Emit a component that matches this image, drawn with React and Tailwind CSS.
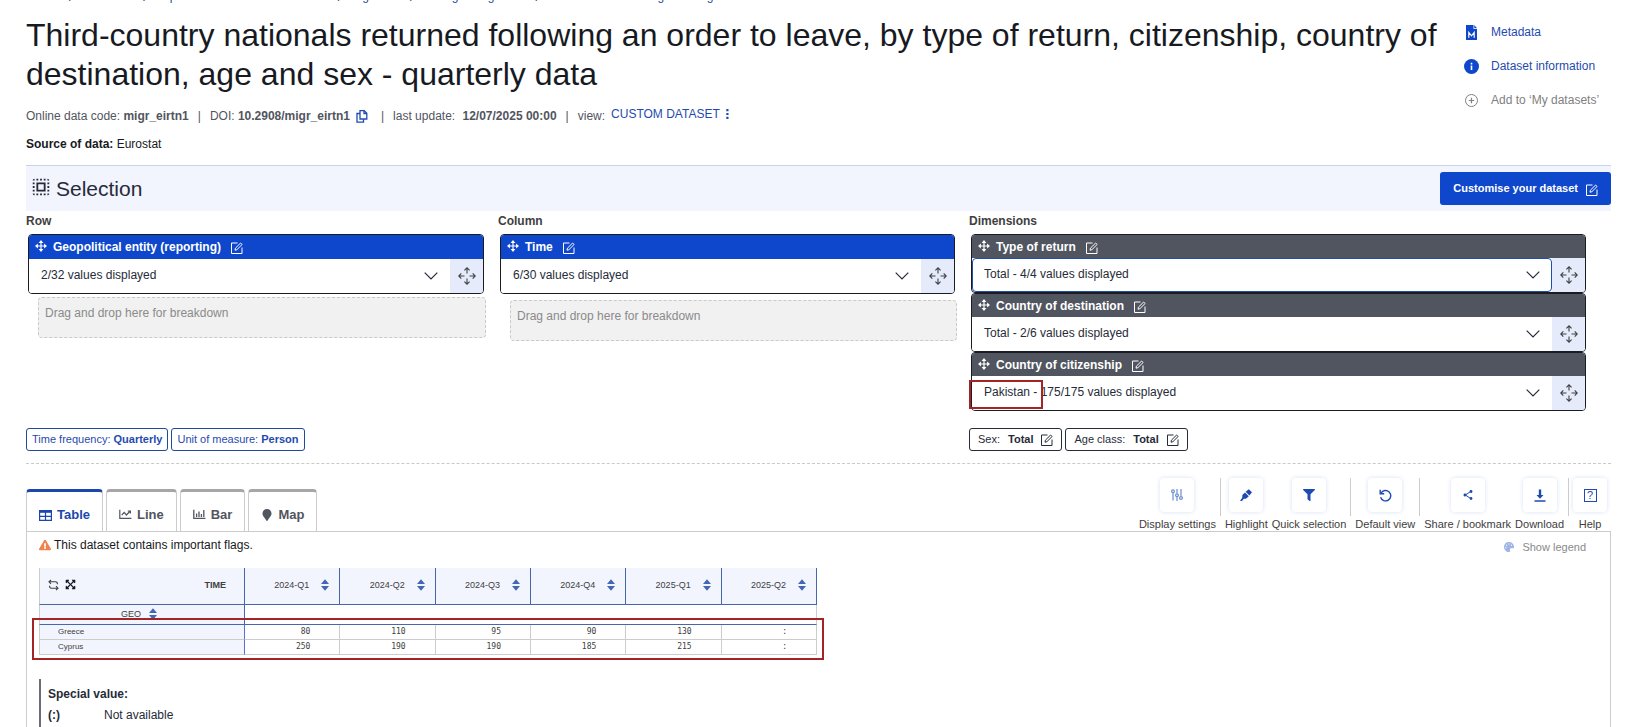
import { FaFilter, FaExclamationTriangle, FaPalette, FaMapMarker, FaExpandArrowsAlt } from 'react-icons/fa';
import { MdSelectAll, MdShare } from 'react-icons/md';

const crumbs = ['Home', 'Database', 'Population and social conditions', 'Migration', 'Managed migration', 'Enforcement of immigration legislation'];

const periods = ['2024-Q1', '2024-Q2', '2024-Q3', '2024-Q4', '2025-Q1', '2025-Q2'];

const rows = [
  { geo: 'Greece', values: ['80', '110', '95', '90', '130', ':'] },
  { geo: 'Cyprus', values: ['250', '190', '190', '185', '215', ':'] },
];

const EditIcon = ({ className = '' }) => (
  <svg viewBox="0 0 12 12" className={`w-3 h-3 shrink-0 ${className}`} fill="none" stroke="currentColor" strokeWidth="1">
    <path d="M6.5 1H.5v10.5H11V5.5" />
    <path d="M4 8.2l.4-2L9.6 1l1.5 1.5-5.2 5.2z" />
  </svg>
);

const MoveIcon = () => (
  <svg viewBox="0 0 12 12" className="-mt-0.5 w-3 h-3 shrink-0" fill="currentColor">
    <path d="M5.4 1.8h1.2v8.4H5.4z" />
    <path d="M1.8 5.4h8.4v1.2H1.8z" />
    <path d="M6 0l2.4 2.9H3.6zM6 12l2.4-2.9H3.6zM0 6l2.9-2.4v4.8zM12 6L9.1 3.6v4.8z" />
  </svg>
);

const DragIcon = () => (
  <svg viewBox="0 0 18 18" className="w-[18px] h-[18px]" fill="none" stroke="currentColor" strokeWidth="1.1">
    <path d="M9 6.5V.9M6.4 3.3L9 .8l2.6 2.5" />
    <path d="M9 11.5v5.6M6.4 14.7L9 17.2l2.6-2.5" />
    <path d="M6.5 9H.9M3.3 6.4L.8 9l2.5 2.6" />
    <path d="M11.5 9h5.6M14.7 6.4L17.2 9l-2.5 2.6" />
  </svg>
);

const SortIcon = () => (
  <svg viewBox="0 0 8 12" className="w-2 h-3 shrink-0 text-[#4267b5]" fill="currentColor">
    <path d="M4 .3L8 5H0zM4 11.7L0 7h8z" />
  </svg>
);

function Dimension({ title, text, dark, focused }) {
  const id = title.toLowerCase().replace(/[^a-z]+/g, '-');
  return (
    <div className="border border-[#1a1c24] rounded overflow-hidden">
      <div className={`flex items-center gap-1.5 px-1.5 text-white ${dark ? 'h-[23px] bg-[#515560]' : 'h-6 bg-[#0e47cb]'}`}>
        <MoveIcon />
        <label htmlFor={id} className="font-bold">{title}</label>
        <button className="ml-1 mt-0.5" aria-label={`Edit ${title}`}><EditIcon /></button>
      </div>
      <div className="flex h-[34px]">
        <div className="relative flex-1">
          <select
            id={id}
            className={`w-full h-full appearance-none bg-white pb-0.5 text-[#262b38] outline-none ${focused ? 'border border-[#1f4fa8] rounded-sm px-[11px]' : 'px-3'}`}
          >
            <option>{text}</option>
          </select>
          <svg viewBox="0 0 14 8" className="absolute right-3 top-[13px] w-3.5 h-2 pointer-events-none text-[#262b38]" fill="none" stroke="currentColor" strokeWidth="1.2">
            <path d="M.7.7L7 7 13.3.7" />
          </svg>
        </div>
        <button className="w-[33px] flex items-center justify-center bg-[#e5ebfb] text-[#404040]" aria-label={`Move ${title}`}>
          <DragIcon />
        </button>
      </div>
    </div>
  );
}

const DropZone = ({ className }) => (
  <div className={`ml-2.5 -mr-0.5 h-[41px] rounded border border-dashed border-[#c9c9c9] bg-[#f1f1f1] px-1.5 pt-[7px] text-[#8a8a8a] ${className}`}>
    Drag and drop here for breakdown
  </div>
);

function Tab({ label, active, children }) {
  return (
    <button
      className={`-mb-px flex h-[43px] items-center gap-[5px] border-x border-t-3 rounded-t-sm pt-1.5 px-3 text-[13px] font-bold ${
        active ? 'bg-white border-x-[#ccc] border-t-[#1b47ad] text-[#1b47ad]' : 'border-b border-[#ccc] border-t-[#a6a6a6] text-[#515560]'
      }`}
    >
      {children}
      {label}
    </button>
  );
}

function Tool({ label, children }) {
  return (
    <button className="flex flex-col items-center gap-[5px] text-[11px] leading-[14px] text-[#404040] whitespace-nowrap">
      <span className="flex w-[34px] h-[34px] items-center justify-center rounded bg-white text-[#1f4bb0] shadow-[0_0_4px_#d5dff2]">
        {children}
      </span>
      {label}
    </button>
  );
}

const Separator = () => <div className="w-px h-[38px] bg-[#ccc]" />;

export default function App() {
  return (
    <div className="flex min-h-screen flex-col overflow-hidden bg-white pl-[26px] pr-[39px] font-['Liberation_Sans',Arial,sans-serif] text-xs text-[#262b38]">
      <nav className="-mt-3 flex h-4 shrink-0 items-center gap-[11px] text-[#1f4b9a]">
        {crumbs.map((crumb, i) => (
          <span key={crumb} className="flex items-center gap-2">
            {i > 0 && <span className="text-sm">/</span>}
            <a href="#">{crumb}</a>
          </span>
        ))}
      </nav>

      <header className="flex justify-between pt-3">
        <div>
          <h1 className="max-w-[1420px] text-[32px] leading-[39px] text-[#171a22]">
            Third-country nationals returned following an order to leave, by type of return, citizenship, country of destination, age and sex - quarterly data
          </h1>
          <div className="mt-3.5 flex items-center gap-[9px] text-[#515560]">
            <span>Online data code: <b>migr_eirtn1</b></span>
            <span>|</span>
            <span className="flex items-center gap-1.5">
              <span>DOI: <b>10.2908/migr_eirtn1</b></span>
              <button aria-label="Copy DOI" className="text-[#1f4bb0]">
                <svg viewBox="0 0 12 13" className="w-3 h-[13px]" fill="none" stroke="currentColor" strokeWidth="1.3">
                  <path d="M4 .7h4.2l2.6 2.6V9H4z" />
                  <path d="M8 .7v2.8h2.8M4 3.5H1v8.6h6.5V9.3" />
                </svg>
              </button>
            </span>
            <span className="ml-1">|</span>
            <span>last update: <b className="ml-1">12/07/2025 00:00</b></span>
            <span>|</span>
            <span className="flex items-center gap-1.5">
              view:
              <button className="-mt-1 flex items-center gap-1.5 text-[#1f4bb0]">
                CUSTOM DATASET
                <svg viewBox="0 0 3 10" className="w-[3px] h-2.5" fill="currentColor">
                  <path d="M.3 0h2.2v2.2H.3zM.3 3.9h2.2v2.2H.3zM.3 7.8h2.2V10H.3z" />
                </svg>
              </button>
            </span>
          </div>
          <p className="mt-3 text-[#171a22]"><b>Source of data:</b> Eurostat</p>
        </div>
        <ul className="flex w-[147px] shrink-0 flex-col gap-[18px] pt-2 text-[#1f4bb0]">
          <li>
            <a href="#" className="flex items-center gap-3">
              <svg viewBox="0 0 15 15" className="w-[15px] h-[15px]">
                <path d="M2 0h7.5v4H13v11H2z M10.3 0L13 3.2h-2.7z" fill="#0e47cb" />
                <path d="M4.8 12.7V7.4l2.7 3.4 2.7-3.4v5.3" fill="none" stroke="#fff" strokeWidth="1.2" />
              </svg>
              Metadata
            </a>
          </li>
          <li>
            <a href="#" className="flex items-center gap-3">
              <svg viewBox="0 0 15 15" className="w-[15px] h-[15px]">
                <circle cx="7.5" cy="7.5" r="7.5" fill="#0e47cb" />
                <path d="M6.7 6.5h1.6V11H6.7zM6.7 3.8h1.6v1.6H6.7z" fill="#fff" />
              </svg>
              Dataset information
            </a>
          </li>
          <li>
            <button className="flex items-center gap-3 text-[#808080]">
              <svg viewBox="0 0 15 15" className="w-[15px] h-[15px]" fill="none" stroke="currentColor">
                <circle cx="7.5" cy="7.5" r="6" />
                <path d="M7.5 4.8v5.4M4.8 7.5h5.4" strokeWidth="1.2" />
              </svg>
              Add to ‘My datasets’
            </button>
          </li>
        </ul>
      </header>

      <section>
        <div className="mt-[13px] flex h-[46px] items-center justify-between border-t border-[#c5d5e9] bg-[#f2f5fd]">
          <h2 className="flex items-center gap-1 pl-1 text-[21px]">
            <MdSelectAll className="-mt-1 w-[22px] h-[22px]" />
            Selection
          </h2>
          <button className="flex h-[33px] items-center gap-2 rounded-[3px] bg-[#0e47cb] px-[13px] text-[11px] font-bold text-white">
            Customise your dataset
            <EditIcon className="mt-0.5" />
          </button>
        </div>

        <div className="grid grid-cols-[472fr_471fr_642fr] pt-0.5">
          <div className="pr-3.5">
            <h3 className="mb-[5px] font-bold text-[#404040]">Row</h3>
            <div className="pl-0.5">
              <Dimension title="Geopolitical entity (reporting)" text="2/32 values displayed" />
              <DropZone className="mt-[3px]" />
            </div>
          </div>
          <div className="pr-3.5">
            <h3 className="mb-[5px] font-bold text-[#404040]">Column</h3>
            <div className="pl-0.5">
              <Dimension title="Time" text="6/30 values displayed" />
              <DropZone className="mt-1.5" />
            </div>
          </div>
          <div className="pr-[25px]">
            <h3 className="mb-[5px] font-bold text-[#404040]">Dimensions</h3>
            <div className="relative pl-0.5">
              <Dimension dark focused title="Type of return" text="Total - 4/4 values displayed" />
              <Dimension dark title="Country of destination" text="Total - 2/6 values displayed" />
              <Dimension dark title="Country of citizenship" text="Pakistan - 175/175 values displayed" />
              <div className="absolute bottom-0.5 left-0 h-[29px] w-[74px] border-2 border-[#a32424]" />
            </div>
          </div>
          <div className="col-span-2 mt-[17px] flex gap-[3px] text-[11px] text-[#1f4bb0]">
            <button className="h-[23px] rounded-[3px] border border-[#1f4b9a] px-[5px]">Time frequency: <b>Quarterly</b></button>
            <button className="h-[23px] rounded-[3px] border border-[#1f4b9a] px-[5px]">Unit of measure: <b>Person</b></button>
          </div>
          <div className="mt-[17px] flex gap-[3px] text-[11px]">
            <button className="flex h-[23px] items-center gap-2 rounded-[3px] border border-[#262b38] px-2">Sex: <b>Total</b><EditIcon /></button>
            <button className="flex h-[23px] items-center gap-2 rounded-[3px] border border-[#262b38] px-2">Age class: <b>Total</b><EditIcon /></button>
          </div>
        </div>
      </section>

      <div className="mt-3 border-t border-dashed border-[#c9c9c9]" />

      <div className="mt-3.5 flex items-end justify-between">
        <div className="flex gap-[3px]">
          <Tab label="Table" active>
            <svg viewBox="0 0 13 11" className="w-[13px] h-[11px]" fill="none" stroke="currentColor" strokeWidth="1.2">
              <path d="M.6.6h11.8v9.8H.6zM6.5 2v8.4M.6 6.3h11.8" />
              <path d="M.6 1.6h11.8" strokeWidth="2.4" />
            </svg>
          </Tab>
          <Tab label="Line">
            <svg viewBox="0 0 13 11" className="w-[13px] h-[11px]" fill="none" stroke="currentColor" strokeWidth="1.2">
              <path d="M.8.8v8.6h11.6M2.8 6l2.4-2.6L7.4 6l3.8-4M8.8 2h2.6v2.4" />
            </svg>
          </Tab>
          <Tab label="Bar">
            <svg viewBox="0 0 13 11" className="w-[13px] h-[11px]" fill="none" stroke="currentColor" strokeWidth="1.3">
              <path d="M.8.8v8.6h11.6M3.6 8V4.5M6 8V2.5M8.4 8V5M10.8 8V1" />
            </svg>
          </Tab>
          <Tab label="Map"><FaMapMarker className="w-3 h-3" /></Tab>
        </div>
        <div className="mr-1 flex gap-1">
          <Tool label="Display settings">
            <svg viewBox="0 0 12 12" className="w-3 h-3 text-[#6f8fd0]" fill="none" stroke="currentColor" strokeWidth="1.2">
              <path d="M2 4v7.5M6 0v4.5M6 8v4M10 0v7" />
              <circle cx="2" cy="2.2" r="1.4" />
              <circle cx="6" cy="6.2" r="1.4" />
              <circle cx="10" cy="9" r="1.4" />
            </svg>
          </Tool>
          <Separator />
          <Tool label="Highlight">
            <svg viewBox="0 0 12 12" className="w-3 h-3" fill="currentColor">
              <path d="M8.8.2L12 3.2 9.4 6.6 5.6 2.8zM5 3.4l3.8 3.8L6 9.8H3.9L2 12H0l2.3-3.6V6z" />
            </svg>
          </Tool>
          <Tool label="Quick selection"><FaFilter className="w-3 h-3" /></Tool>
          <Separator />
          <Tool label="Default view">
            <svg viewBox="0 0 13 13" className="w-[13px] h-[13px]" fill="none" stroke="currentColor" strokeWidth="1.4">
              <path d="M2 4.2a5.2 5.2 0 1 1-.4 4" />
              <path d="M1.2 0.8v4h4" />
            </svg>
          </Tool>
          <Separator />
          <Tool label="Share / bookmark"><MdShare className="w-3 h-3" /></Tool>
          <Tool label="Download">
            <svg viewBox="0 0 12 13" className="w-3 h-[13px]" fill="currentColor">
              <path d="M4.8.5h2.4V6h2.3L6 9.8 2.5 6h2.3zM.5 11.3h11v1.4H.5z" />
            </svg>
          </Tool>
          <Separator />
          <Tool label="Help">
            <span className="flex h-[13px] w-[13px] items-center justify-center border border-current text-[11px] leading-none">?</span>
          </Tool>
        </div>
      </div>

      <main className="flex flex-1 flex-col border border-b-0 border-[#ccc] px-3 text-[#171a22]">
        <div className="mt-1 flex items-center justify-between">
          <p className="flex items-center gap-[3px]">
            <FaExclamationTriangle className="w-3 h-3 text-[#f0824f]" />
            This dataset contains important flags.
          </p>
          <button className="mt-1 mr-3 flex items-center gap-2 text-[11px] text-[#8a8a8a]">
            <FaPalette className="w-2.5 h-2.5 text-[#9db4e4]" />
            Show legend
          </button>
        </div>

        <div className="relative mt-[13px] w-[778px]">
          <table className="w-full table-fixed border-separate border-spacing-0 text-[9px] leading-3 text-[#404040]">
            <thead>
              <tr className="h-[37px] bg-[#f2f5fd]">
                <th className="w-[206px] border-b border-l border-r border-[#4668ab] border-l-[#ccc] pl-2 pr-[18px] pb-0.5">
                  <div className="flex items-center gap-1.5">
                    <svg viewBox="0 0 11 12" className="w-[11px] h-3" fill="none" stroke="currentColor" strokeWidth="1.1">
                      <path d="M3 .8L1 2.8l2 2M1 2.8h6.5q2 0 2 2.4M8 7.2l2 2-2 2M10 9.2H3.5q-2 0-2-2.4" />
                    </svg>
                    <FaExpandArrowsAlt className="w-[11px] h-[11px] text-[#171a22]" />
                    <span className="ml-auto">TIME</span>
                  </div>
                </th>
                {periods.map((p) => (
                  <th key={p} className="border-b border-r border-[#4668ab] pl-3 pr-2.5 pb-0.5 font-normal">
                    <div className="flex items-center justify-end gap-3">{p}<SortIcon /></div>
                  </th>
                ))}
              </tr>
              <tr className="h-5">
                <th className="border-b border-l border-r border-[#4668ab] border-l-[#ccc] bg-[#f2f5fd] font-normal">
                  <div className="flex items-center justify-center gap-2 pr-1.5">GEO<SortIcon /></div>
                </th>
                <td colSpan={6} className="border-b border-r border-b-[#4668ab] border-r-[#ccc]" />
              </tr>
            </thead>
            <tbody>
              {rows.map((row) => (
                <tr key={row.geo} className="h-[15px]">
                  <th className="border-b border-l border-r border-[#ccc] border-r-[#5a6fd0] bg-[#f2f5fd] pl-[18px] text-left text-[8px] font-normal">{row.geo}</th>
                  {row.values.map((v, i) => (
                    <td key={periods[i]} className="border-b border-r border-[#ccc] pr-[29px] text-right font-['DejaVu_Sans_Mono',monospace] text-[8px]">{v}</td>
                  ))}
                </tr>
              ))}
            </tbody>
          </table>
          <div className="absolute -left-[7px] -right-[7px] -bottom-[5px] h-[42px] border-2 border-[#a32424]" />
        </div>

        <div className="mt-6 flex-1 border-l-2 border-[#6b6d75] pl-[7px] pt-[5px] text-[#262b38]">
          <h4 className="font-bold leading-5">Special value:</h4>
          <dl className="flex leading-[22px]">
            <dt className="w-14 font-bold">(:)</dt>
            <dd>Not available</dd>
          </dl>
        </div>
      </main>
    </div>
  );
}
